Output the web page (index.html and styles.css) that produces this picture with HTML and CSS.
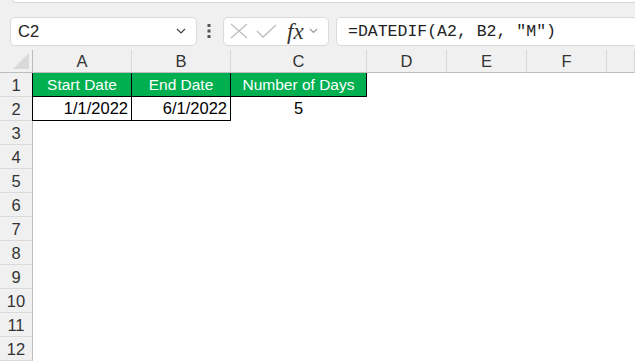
FILE: index.html
```html
<!DOCTYPE html>
<html lang="en">
<head>
    <meta charset="UTF-8">
    <meta name="viewport" content="width=device-width, initial-scale=1.0">
    <title>DATEDIF - Excel</title>
    <link rel="stylesheet" href="styles.css">
</head>
<body>
    <div class="ribbon-edge"></div>

    <div class="formula-bar">
        <div class="name-box">
            <span>C2</span>
            <svg class="chevron" width="10" height="6" viewBox="0 0 10 6"><path d="M1 1 L5 5 L9 1" fill="none" stroke="#444" stroke-width="1.2"/></svg>
        </div>
        <svg class="dots" width="4" height="14" viewBox="0 0 4 14">
            <rect x="0.5" y="0" width="3" height="3" fill="#555"/>
            <rect x="0.5" y="5.5" width="3" height="3" fill="#555"/>
            <rect x="0.5" y="11" width="3" height="3" fill="#555"/>
        </svg>
        <div class="fx-box">
            <svg width="18" height="16" viewBox="0 0 18 16"><path d="M1 1 L17 15 M17 1 L1 15" stroke="#bdbdbd" stroke-width="1.3" fill="none"/></svg>
            <svg width="21" height="14" viewBox="0 0 21 14"><path d="M1 7 L7 13 L20 1" stroke="#bdbdbd" stroke-width="1.3" fill="none"/></svg>
            <span class="fx">fx</span>
            <svg width="9" height="6" viewBox="0 0 9 6"><path d="M1 1 L4.5 4.5 L8 1" fill="none" stroke="#999" stroke-width="1.1"/></svg>
        </div>
        <div class="formula-input">=DATEDIF(A2, B2, "M")</div>
    </div>

    <div class="sheet">
        <div class="corner"><div class="corner-tri"></div></div>
        <div class="col-head">A</div>
        <div class="col-head">B</div>
        <div class="col-head">C</div>
        <div class="col-head">D</div>
        <div class="col-head">E</div>
        <div class="col-head">F</div>
        <div class="col-head"></div>

        <div class="row-head">1</div>
        <div class="cell head-cell first-col">Start Date</div>
        <div class="cell head-cell">End Date</div>
        <div class="cell head-cell">Number of Days</div>
        <div class="cell"></div>
        <div class="cell"></div>
        <div class="cell"></div>
        <div class="cell"></div>

        <div class="row-head">2</div>
        <div class="cell boxed first-col num">1/1/2022</div>
        <div class="cell boxed num">6/1/2022</div>
        <div class="cell center num-val">5</div>
        <div class="cell"></div>
        <div class="cell"></div>
        <div class="cell"></div>
        <div class="cell"></div>

        <div class="row-head">3</div><div class="cell"></div><div class="cell"></div><div class="cell"></div><div class="cell"></div><div class="cell"></div><div class="cell"></div><div class="cell"></div>
        <div class="row-head">4</div><div class="cell"></div><div class="cell"></div><div class="cell"></div><div class="cell"></div><div class="cell"></div><div class="cell"></div><div class="cell"></div>
        <div class="row-head">5</div><div class="cell"></div><div class="cell"></div><div class="cell"></div><div class="cell"></div><div class="cell"></div><div class="cell"></div><div class="cell"></div>
        <div class="row-head">6</div><div class="cell"></div><div class="cell"></div><div class="cell"></div><div class="cell"></div><div class="cell"></div><div class="cell"></div><div class="cell"></div>
        <div class="row-head">7</div><div class="cell"></div><div class="cell"></div><div class="cell"></div><div class="cell"></div><div class="cell"></div><div class="cell"></div><div class="cell"></div>
        <div class="row-head">8</div><div class="cell"></div><div class="cell"></div><div class="cell"></div><div class="cell"></div><div class="cell"></div><div class="cell"></div><div class="cell"></div>
        <div class="row-head">9</div><div class="cell"></div><div class="cell"></div><div class="cell"></div><div class="cell"></div><div class="cell"></div><div class="cell"></div><div class="cell"></div>
        <div class="row-head">10</div><div class="cell"></div><div class="cell"></div><div class="cell"></div><div class="cell"></div><div class="cell"></div><div class="cell"></div><div class="cell"></div>
        <div class="row-head">11</div><div class="cell"></div><div class="cell"></div><div class="cell"></div><div class="cell"></div><div class="cell"></div><div class="cell"></div><div class="cell"></div>
        <div class="row-head">12</div><div class="cell"></div><div class="cell"></div><div class="cell"></div><div class="cell"></div><div class="cell"></div><div class="cell"></div><div class="cell"></div>
    </div>
</body>
</html>
```

FILE: styles.css
```css
* {
    box-sizing: border-box;
}

body {
    margin: 0;
    width: 635px;
    height: 361px;
    overflow: hidden;
    background-color: #f0f0f0;
    font-family: "Liberation Sans", Arial, sans-serif;
    color: #222;
}

.ribbon-edge {
    height: 3px;
    margin-left: 12px;
    background-color: #fff;
    border-bottom: 1px solid #d8d8d8;
    border-left: 1px solid #d8d8d8;
    border-bottom-left-radius: 5px;
}

/* Formula bar */
.formula-bar {
    display: flex;
    align-items: center;
    height: 47px;
    padding: 9px 0 0 10px;
    margin-right: -20px;
}

.name-box {
    display: flex;
    align-items: center;
    justify-content: space-between;
    width: 187px;
    height: 29px;
    padding: 0 10px 0 7px;
    background-color: #fff;
    border: 1px solid #dadada;
    border-radius: 5px;
    font-size: 16.5px;
}

.dots {
    margin: 0 12px 0 10px;
}

.fx-box {
    display: flex;
    align-items: center;
    width: 106px;
    height: 29px;
    padding: 0 5px 0 6px;
    background-color: #fff;
    border: 1px solid #dadada;
    border-radius: 5px;
    gap: 8px;
}

.fx {
    font-family: "Liberation Serif", "Times New Roman", serif;
    font-style: italic;
    font-size: 23px;
    line-height: 1;
    color: #333;
    margin-left: 2px;
    margin-right: -3px;
}

.formula-input {
    flex: 1;
    height: 29px;
    margin-left: 7px;
    padding-left: 11px;
    line-height: 27px;
    background-color: #fff;
    border: 1px solid #dadada;
    border-radius: 5px;
    font-family: "Liberation Mono", "Courier New", monospace;
    font-size: 16.5px;
    color: #222;
}

/* Sheet grid */
.sheet {
    display: grid;
    grid-template-columns: 33px 99px 99px 136px 80px 80px 80px 1fr;
    grid-template-rows: 23px repeat(12, 24px);
    background-color: #fff;
    font-size: 16px;
}

.corner {
    background-color: #f0f0f0;
    border-right: 1px solid #bdbdbd;
    border-bottom: 1px solid #bdbdbd;
    padding: 3px 0 0 13px;
}

.corner-tri {
    width: 0;
    height: 0;
    border-left: 16px solid transparent;
    border-bottom: 16px solid #d9d9d9;
}

.col-head {
    background-color: #f0f0f0;
    border-right: 1px solid #d8d8d8;
    border-bottom: 1px solid #bdbdbd;
    text-align: center;
    line-height: 23px;
    font-size: 16.5px;
    color: #333;
}

.row-head {
    background-color: #f0f0f0;
    border-right: 1px solid #bdbdbd;
    border-bottom: 1px solid #dadada;
    text-align: center;
    line-height: 24px;
    font-size: 16.5px;
    color: #333;
}

.cell {
    border-right: 1px solid #fff;
    border-bottom: 1px solid #fff;
    line-height: 23px;
    padding: 0 3px;
    white-space: nowrap;
    color: #000;
}

.head-cell {
    background-color: #00b050;
    color: #fff;
    text-align: center;
    font-size: 15.5px;
    border-right-color: #000;
    border-bottom-color: #000;
}

.boxed {
    border-right-color: #000;
    border-bottom-color: #000;
}

.first-col {
    box-shadow: -1px 0 0 #000;
}

.num {
    text-align: right;
    font-size: 16.5px;
}

.num-val {
    font-size: 16.5px;
}

.center {
    text-align: center;
}
```
